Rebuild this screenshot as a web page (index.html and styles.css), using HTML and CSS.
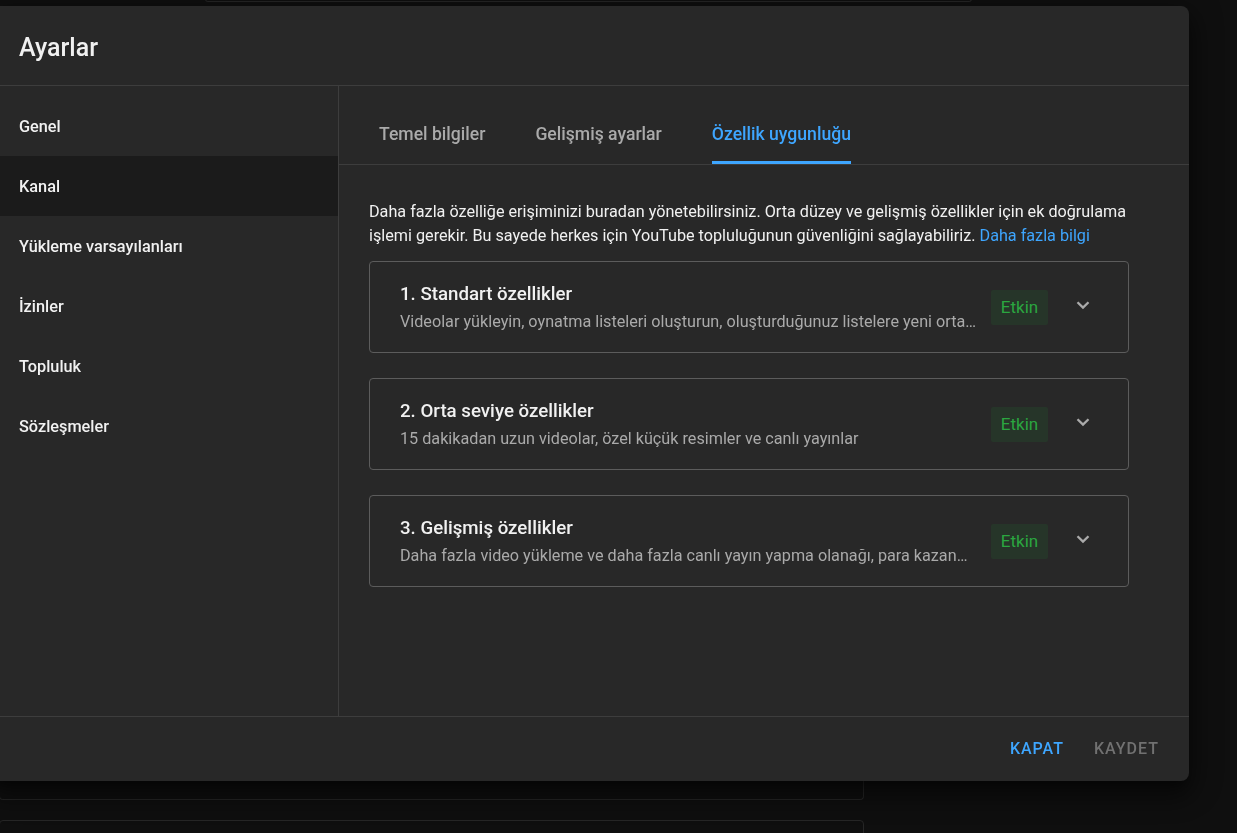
FILE: index.html
```html
<!DOCTYPE html>
<html lang="tr">
<head>
<meta charset="utf-8">
<title>Ayarlar</title>
<link rel="stylesheet" href="styles.css">
</head>
<body>
<div class="page">
  <div class="bg-card bg-card-top"></div>
  <div class="bg-spacer"></div>
  <div class="bg-card bg-card-mid"></div>
  <div class="bg-card bg-card-low"></div>
</div>

<div class="dialog" role="dialog" aria-label="Ayarlar">
  <header class="dialog-header">
    <h1 class="dialog-title">Ayarlar</h1>
  </header>
  <div class="dialog-body">
    <nav class="sidebar">
      <div class="nav-item">Genel</div>
      <div class="nav-item selected">Kanal</div>
      <div class="nav-item">Yükleme varsayılanları</div>
      <div class="nav-item">İzinler</div>
      <div class="nav-item">Topluluk</div>
      <div class="nav-item">Sözleşmeler</div>
    </nav>
    <main class="main">
      <div class="tabs">
        <div class="tab">Temel bilgiler</div>
        <div class="tab">Gelişmiş ayarlar</div>
        <div class="tab active">Özellik uygunluğu</div>
      </div>
      <div class="content">
        <p class="intro">Daha fazla özelliğe erişiminizi buradan yönetebilirsiniz. Orta düzey ve gelişmiş özellikler için ek doğrulama işlemi gerekir. Bu sayede herkes için YouTube topluluğunun güvenliğini sağlayabiliriz. <a class="link" href="#">Daha fazla bilgi</a></p>

        <div class="feature">
          <div class="feature-text">
            <div class="feature-title">1. Standart özellikler</div>
            <div class="feature-desc">Videolar yükleyin, oynatma listeleri oluşturun, oluşturduğunuz listelere yeni ortak çalışanlar ekleyin</div>
          </div>
          <div class="badge">Etkin</div>
          <button class="chev" aria-label="Genişlet">
            <svg viewBox="0 0 24 24" width="24" height="24"><path d="M6.5 9.2 12 14.6l5.5-5.4" fill="none" stroke="currentColor" stroke-width="2.3"/></svg>
          </button>
        </div>

        <div class="feature">
          <div class="feature-text">
            <div class="feature-title">2. Orta seviye özellikler</div>
            <div class="feature-desc">15 dakikadan uzun videolar, özel küçük resimler ve canlı yayınlar</div>
          </div>
          <div class="badge">Etkin</div>
          <button class="chev" aria-label="Genişlet">
            <svg viewBox="0 0 24 24" width="24" height="24"><path d="M6.5 9.2 12 14.6l5.5-5.4" fill="none" stroke="currentColor" stroke-width="2.3"/></svg>
          </button>
        </div>

        <div class="feature">
          <div class="feature-text">
            <div class="feature-title">3. Gelişmiş özellikler</div>
            <div class="feature-desc">Daha fazla video yükleme ve daha fazla canlı yayın yapma olanağı, para kazanma ve daha fazlası</div>
          </div>
          <div class="badge">Etkin</div>
          <button class="chev" aria-label="Genişlet">
            <svg viewBox="0 0 24 24" width="24" height="24"><path d="M6.5 9.2 12 14.6l5.5-5.4" fill="none" stroke="currentColor" stroke-width="2.3"/></svg>
          </button>
        </div>
      </div>
    </main>
  </div>
  <footer class="dialog-footer">
    <button class="btn btn-primary">KAPAT</button>
    <button class="btn btn-disabled">KAYDET</button>
  </footer>
</div>
</body>
</html>
```

FILE: styles.css
```css
html, body {
  margin: 0;
  padding: 0;
  background: #0f0f0f;
  height: 100%;
  overflow: hidden;
  font-family: Roboto, "Noto Sans", Arial, sans-serif;
  color: #f1f1f1;
}

/* background page (behind the modal) */
.page {
  display: flex;
  flex-direction: column;
}
.bg-card {
  border: 1px solid #262626;
  border-radius: 0 0 4px 4px;
  background: #0f0f0f;
}
.bg-card-top {
  margin-left: 205px;
  width: 765px;
  height: 2px;
  margin-top: -1px;
  border-top: none;
}
.bg-spacer { height: 777px; }
.bg-card-mid {
  width: 863px;
  height: 20px;
  margin-left: -1px;
  border-top: none;
}
.bg-card-low {
  width: 863px;
  height: 40px;
  margin-left: -1px;
  margin-top: 20px;
  border-radius: 4px 4px 0 0;
}

/* dialog */
.dialog {
  position: fixed;
  top: 6px;
  left: -8px;
  width: 1197px;
  height: 775px;
  background: #282828;
  border-radius: 8px;
  box-shadow: 0 16px 24px 2px rgba(0,0,0,0.3), 0 6px 30px 5px rgba(0,0,0,0.3), 0 8px 10px -5px rgba(0,0,0,0.4);
  display: flex;
  flex-direction: column;
  overflow: hidden;
}

.dialog-header {
  height: 79px;
  border-bottom: 1px solid #3d3d3d;
  display: flex;
  align-items: center;
  padding-left: 27px;
  flex-shrink: 0;
}
.dialog-title {
  margin: 0;
  font-size: 25px;
  font-weight: 500;
  color: #f1f1f1;
  line-height: 32px;
  padding-top: 4px;
}

.dialog-body {
  flex: 1;
  display: flex;
  min-height: 0;
}

.sidebar {
  width: 347px;
  flex-shrink: 0;
  border-right: 1px solid #3d3d3d;
  padding-top: 10px;
  box-sizing: border-box;
}
.nav-item {
  height: 60px;
  display: flex;
  align-items: center;
  padding-left: 27px;
  font-size: 16.3px;
  font-weight: 500;
  color: #f1f1f1;
}
.nav-item.selected {
  background: #1b1b1b;
}

.main {
  flex: 1;
  display: flex;
  flex-direction: column;
  min-width: 0;
}

.tabs {
  height: 78px;
  border-bottom: 1px solid #3d3d3d;
  display: flex;
  align-items: flex-end;
  gap: 50px;
  padding-left: 40px;
  flex-shrink: 0;
}
.tab {
  font-size: 17.6px;
  font-weight: 500;
  line-height: 24px;
  color: #aaaaaa;
  padding-bottom: 15px;
  border-bottom: 3px solid transparent;
}
.tab.active {
  color: #3ea6ff;
  border-bottom-color: #3ea6ff;
  border-radius: 2px 2px 0 0;
}

.content {
  padding: 35px 60px 0 30px;
}
.intro {
  margin: 0 0 13px;
  font-size: 16.2px;
  line-height: 24px;
  color: #f1f1f1;
}
.link {
  color: #3ea6ff;
  text-decoration: none;
}

.feature {
  border: 1px solid #5c5c5c;
  border-radius: 4px;
  display: flex;
  align-items: center;
  padding: 20px 25px 20px 30px;
  margin-bottom: 25px;
  height: 50px;
}
.feature-text {
  flex: 1;
  min-width: 0;
  margin-right: 12px;
}
.feature-title {
  font-size: 18.7px;
  font-weight: 500;
  line-height: 24px;
  color: #f1f1f1;
}
.feature-desc {
  margin-top: 6px;
  font-size: 16.2px;
  line-height: 20px;
  color: #aaaaaa;
  white-space: nowrap;
  overflow: hidden;
  text-overflow: ellipsis;
}
.badge {
  flex-shrink: 0;
  width: 57px;
  height: 35px;
  display: flex;
  align-items: center;
  justify-content: center;
  background: #263529;
  color: #2ba640;
  font-size: 17px;
  border-radius: 2px;
}
.chev {
  flex-shrink: 0;
  margin-left: 15px;
  width: 40px;
  height: 40px;
  border: none;
  background: transparent;
  color: #aaaaaa;
  padding: 0 0 4px;
  display: flex;
  align-items: center;
  justify-content: center;
  border-radius: 50%;
}

.dialog-footer {
  height: 64px;
  border-top: 1px solid #3d3d3d;
  display: flex;
  align-items: center;
  justify-content: flex-end;
  gap: 0;
  padding-right: 14px;
  flex-shrink: 0;
}
.btn {
  background: transparent;
  border: none;
  font-family: Roboto, "Noto Sans", Arial, sans-serif;
  font-size: 16px;
  font-weight: 500;
  letter-spacing: 1px;
  padding: 8px 16px;
  line-height: 20px;
}
.btn-primary { color: #3ea6ff; margin-right: -2px; }
.btn-disabled { color: #717171; }
```
